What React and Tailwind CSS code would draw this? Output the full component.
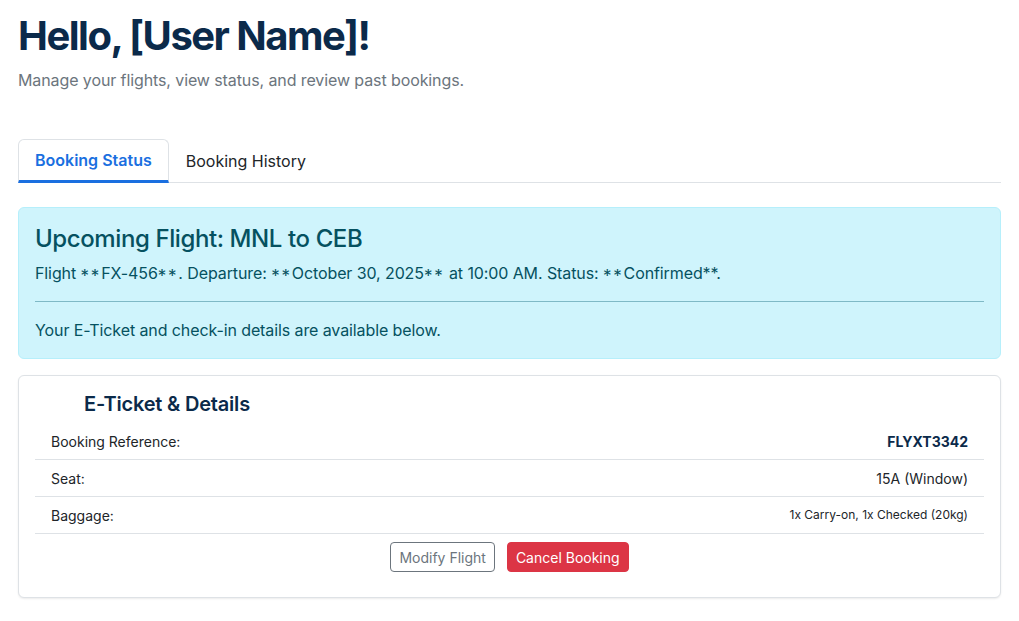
function Ast() {
  return <span className="inline-block translate-y-[3px] text-[17px] tracking-[1.8px]">**</span>;
}

export default function App() {
  const font = { fontFamily: "Inter, 'Noto Sans', sans-serif" };
  return (
    <div className="min-h-[621px] bg-white px-[18px] pt-[12px] text-[#212529]" style={font}>
      <h1 className="text-[40px] leading-[48px] font-bold text-[#0b2a4a] tracking-[-1.5px]">Hello, [User Name]!</h1>
      <p className="mt-[8px] text-[16px] leading-[24px] text-[#6c757d] tracking-[-0.1px]">Manage your flights, view status, and review past bookings.</p>

      <div className="mt-[47px] flex border-b border-[#dee2e6]">
        <div className="-mb-px flex h-[44px] items-center rounded-t-[6px] border border-b-[3px] border-[#dee2e6] border-b-[#1a6fe0] bg-white px-[16px] text-[16px] font-semibold text-[#1a6fe0]">
          Booking Status
        </div>
        <div className="flex h-[43px] items-center border border-transparent px-[16px] text-[16px] text-[#212529]">
          Booking History
        </div>
      </div>

      <div className="mt-[24px] rounded-[6px] border border-[#b6effb] bg-[#cff4fc] p-[16px] text-[#055160]">
        <h4 className="text-[24px] leading-[29px] font-medium tracking-[-0.4px]">Upcoming Flight: MNL to CEB</h4>
        <p className="mt-[8px] text-[16px] leading-[24px] tracking-[-0.1px]">
          Flight <Ast />FX-456<Ast />. Departure: <Ast />October 30, 2025<Ast /> at 10:00 AM. Status: <Ast />Confirmed**.
        </p>
        <hr className="my-[16px] border-0 border-t border-[#7fb9c6]" />
        <p className="text-[16px] leading-[24px] tracking-[-0.1px]">Your E-Ticket and check-in details are available below.</p>
      </div>

      <div className="mt-[16px] rounded-[6px] border border-[#dee2e6] bg-white px-[16px] pt-[16px] pb-[25px] shadow-[0_1px_2px_rgba(0,0,0,0.08)]">
        <h5 className="pl-[49px] text-[20px] leading-[24px] font-semibold text-[#0b2a4a] tracking-[-0.2px]">E-Ticket &amp; Details</h5>
        <div className="mt-[7px] text-[14px]">
          <div className="flex h-[37px] items-center justify-between border-b border-[#dee2e6] px-[16px]">
            <span>Booking Reference:</span>
            <span className="font-bold text-[#0b2a4a]">FLYXT3342</span>
          </div>
          <div className="flex h-[37px] items-center justify-between border-b border-[#dee2e6] px-[16px]">
            <span>Seat:</span>
            <span>15A (Window)</span>
          </div>
          <div className="flex h-[37px] items-center justify-between border-b border-[#dee2e6] px-[16px]">
            <span>Baggage:</span>
            <span className="text-[12px]">1x Carry-on, 1x Checked (20kg)</span>
          </div>
        </div>
        <div className="mt-[8px] flex justify-center gap-[12px]">
          <button className="h-[30px] rounded-[4px] border border-[#6c757d] bg-white px-[8px] text-[14px] text-[#6c757d]">Modify Flight</button>
          <button className="h-[30px] rounded-[4px] border border-[#dc3545] bg-[#dc3545] px-[8px] text-[14px] text-white">Cancel Booking</button>
        </div>
      </div>
    </div>
  );
}
